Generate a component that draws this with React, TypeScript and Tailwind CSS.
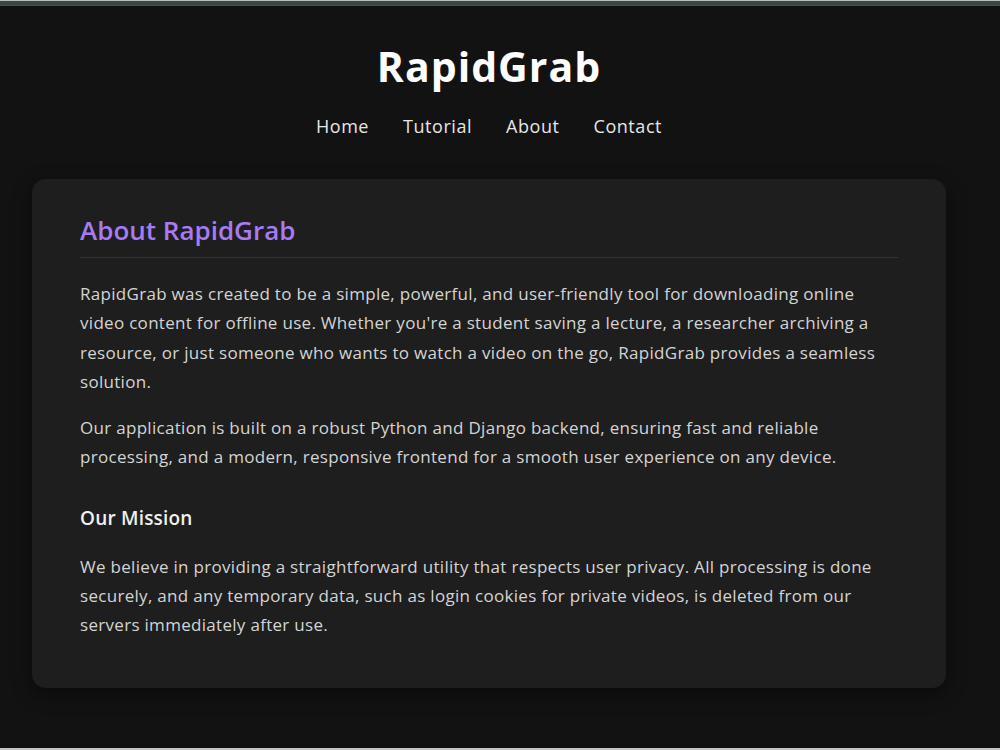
import React from "react";

const navLinks = ["Home", "Tutorial", "About", "Contact"];

export default function App() {
    return (
        <div className="h-screen flex flex-col bg-[#121212] text-[#d4d4d4] overflow-hidden" style={{fontFamily: '"Open Sans", "Liberation Sans", sans-serif'}}>
            {/* window chrome strip */}
            <div className="h-px bg-[#b9bfbc]"/>
            <div className="h-[4px] bg-[#3a4842]"/>
            <div className="h-px bg-[#47544e]"/>

            <main className="flex-1 w-[978px] flex flex-col items-center">
                <header className="flex flex-col items-center pt-[33px]">
                    <h1 className="text-[41px] leading-[54px] font-bold tracking-[1px] text-white">RapidGrab</h1>
                    <nav className="flex gap-[34px] mt-[20px] text-[18px] leading-[26px] tracking-[0.55px] text-[#e6e6e6]">
                        {navLinks.map((link) => (
                            <a key={link} href="#" className="hover:text-white">{link}</a>
                        ))}
                    </nav>
                </header>

                <section className="mt-[40px] w-[914px] rounded-[14px] bg-[#1e1e1e] px-[48px] pt-[34px] pb-[48px] shadow-[0_6px_20px_rgba(0,0,0,0.45)]">
                    <h2 className="text-[26px] leading-[34px] font-semibold text-[#a77bf3] pb-[10px] border-b border-[#333333]">About RapidGrab</h2>
                    <div className="text-[17px] leading-[29.3px] tracking-[0.3px]">
                        <p className="mt-[21px]">
                            RapidGrab was created to be a simple, powerful, and user-friendly tool for downloading online video content for offline use. Whether you're a student saving a lecture, a researcher archiving a resource, or just someone who wants to watch a video on the go, RapidGrab provides a seamless solution.
                        </p>
                        <p className="mt-[17px]">
                            Our application is built on a robust Python and Django backend, ensuring fast and reliable processing, and a modern, responsive frontend for a smooth user experience on any device.
                        </p>
                    </div>
                    <h3 className="mt-[33px] text-[19px] leading-[26px] font-semibold tracking-[0.2px] text-[#f0f0f0]">Our Mission</h3>
                    <p className="mt-[21px] text-[17px] leading-[29.3px] tracking-[0.3px]">
                        We believe in providing a straightforward utility that respects user privacy. All processing is done securely, and any temporary data, such as login cookies for private videos, is deleted from our servers immediately after use.
                    </p>
                </section>
            </main>

            <div className="h-[2px] bg-[#c4c4c4]"/>
        </div>
    );
}
